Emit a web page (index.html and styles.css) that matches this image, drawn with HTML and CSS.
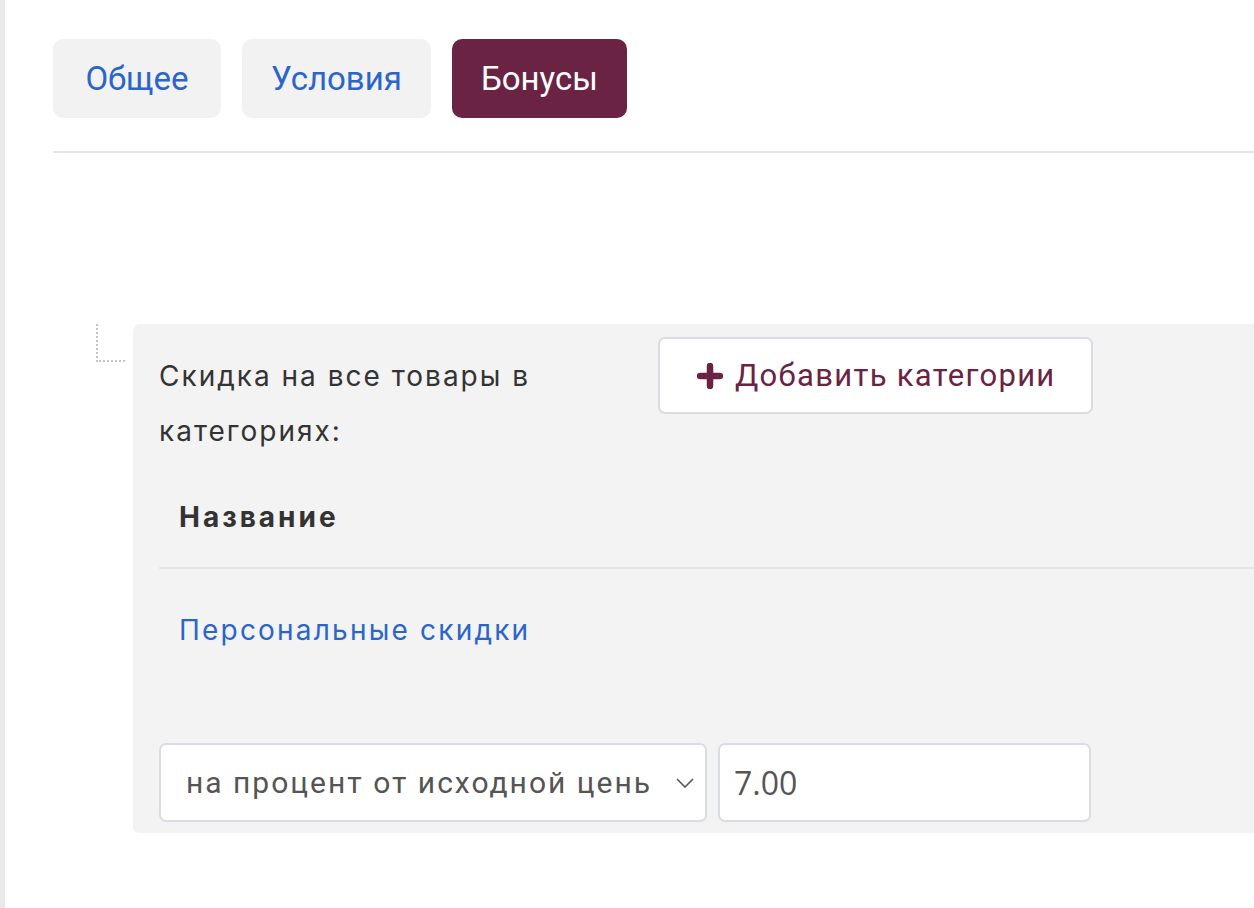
FILE: index.html
```html
<!DOCTYPE html>
<html lang="ru">
<head>
<meta charset="utf-8">
<title>Бонусы</title>
<link rel="stylesheet" href="styles.css">
</head>
<body>
<div class="page">
  <nav class="tabs">
    <a class="tab">Общее</a>
    <a class="tab">Условия</a>
    <a class="tab tab-active">Бонусы</a>
  </nav>
  <div class="divider"></div>

  <div class="rule">
    <div class="connector"></div>
    <div class="panel">
      <div class="panel-head">
        <div class="label">Скидка на все товары в категориях:</div>
        <button class="add-btn" type="button">
          <svg class="plus" viewBox="0 0 26 26" width="26" height="26"><path d="M13 3v20M3 13h20" stroke="#6b2343" stroke-width="6.5" stroke-linecap="round"/></svg>
          <span>Добавить категории</span>
        </button>
      </div>
      <table class="cats">
        <thead><tr><th>Название</th></tr></thead>
        <tbody><tr><td><a class="cat-link">Персональные скидки</a></td></tr></tbody>
      </table>
      <div class="controls">
        <div class="select">
          <span class="select-text">на процент от исходной цень</span>
          <svg class="chev" viewBox="0 0 18 10" width="18" height="10"><path d="M1 1l8 8 8-8" fill="none" stroke="#555" stroke-width="1.6"/></svg>
        </div>
        <div class="input">7.00</div>
      </div>
    </div>
  </div>
</div>
</body>
</html>
```

FILE: styles.css
```css
html, body {
  margin: 0;
  padding: 0;
  background: #ffffff;
  overflow: hidden;
}
.page {
  border-left: 5px solid #e9e9e9;
  min-height: 908px;
  box-sizing: border-box;
  padding-left: 48px;
  padding-top: 39px;
}
.tabs {
  display: flex;
  gap: 21px;
}
.tab {
  display: flex;
  align-items: center;
  justify-content: center;
  min-width: 168px;
  box-sizing: border-box;
  height: 79px;
  padding: 0 29px;
  border-radius: 10px;
  background: #f2f2f2;
  color: #2b65c8;
  font-family: Roboto, "Liberation Sans", sans-serif;
  font-size: 33px;
}
.tab-active {
  background: #6b2343;
  color: #ffffff;
}
.divider {
  margin-top: 33px;
  height: 2px;
  background: #e3e5ec;
}
.rule {
  display: flex;
  margin-top: 171px;
  margin-left: 43px;
}
.connector {
  width: 27px;
  height: 36px;
  border-left: 2px dotted #c4c4c4;
  border-bottom: 2px dotted #c4c4c4;
  margin-right: 8px;
}
.panel {
  flex: 1;
  background: #f3f3f3;
  border-radius: 8px 0 0 6px;
  padding: 13px 0 11px 26px;
  font-family: Inter, "Noto Sans", sans-serif;
  color: #333333;
}
.panel-head {
  display: flex;
  align-items: flex-start;
}
.label {
  width: 499px;
  padding-top: 12px;
  font-size: 28px;
  letter-spacing: 2px;
  line-height: 55px;
  padding-right: 60px;
  box-sizing: border-box;
}
.add-btn {
  display: flex;
  align-items: center;
  gap: 12px;
  height: 77px;
  width: 435px;
  box-sizing: border-box;
  padding: 0 0 0 37px;
  background: #ffffff;
  border: 2px solid #d9dde3;
  border-radius: 7px;
  color: #6b2343;
  font-family: Roboto, "Liberation Sans", sans-serif;
  font-size: 31px;
  letter-spacing: 1.3px;
}
.plus {
  display: block;
  flex: none;
}
.cats {
  width: 100%;
  border-collapse: collapse;
  margin-top: 8px;
}
.cats th {
  text-align: left;
  font-weight: 700;
  font-size: 28px;
  letter-spacing: 3px;
  line-height: 40px;
  padding: 30px 20px;
  border-bottom: 2px solid #e6e6e6;
  color: #333333;
}
.cats td {
  font-size: 28px;
  letter-spacing: 2.2px;
  line-height: 40px;
  padding: 41px 20px;
}
.cat-link {
  color: #2b65c8;
}
.controls {
  display: flex;
  gap: 11px;
  margin-top: 52px;
}
.select, .input {
  height: 79px;
  box-sizing: border-box;
  background: #ffffff;
  border: 2px solid #d9dde3;
  border-radius: 7px;
  display: flex;
  align-items: center;
}
.select {
  width: 548px;
  padding: 0 11px 0 25px;
  justify-content: space-between;
  font-family: Roboto, "Liberation Sans", sans-serif;
  font-size: 30px;
  letter-spacing: 2px;
  color: #555555;
}
.chev {
  display: block;
}
.input {
  width: 373px;
  padding-left: 14px;
  font-family: "Open Sans", Inter, sans-serif;
  font-size: 32px;
  color: #555555;
}
```
